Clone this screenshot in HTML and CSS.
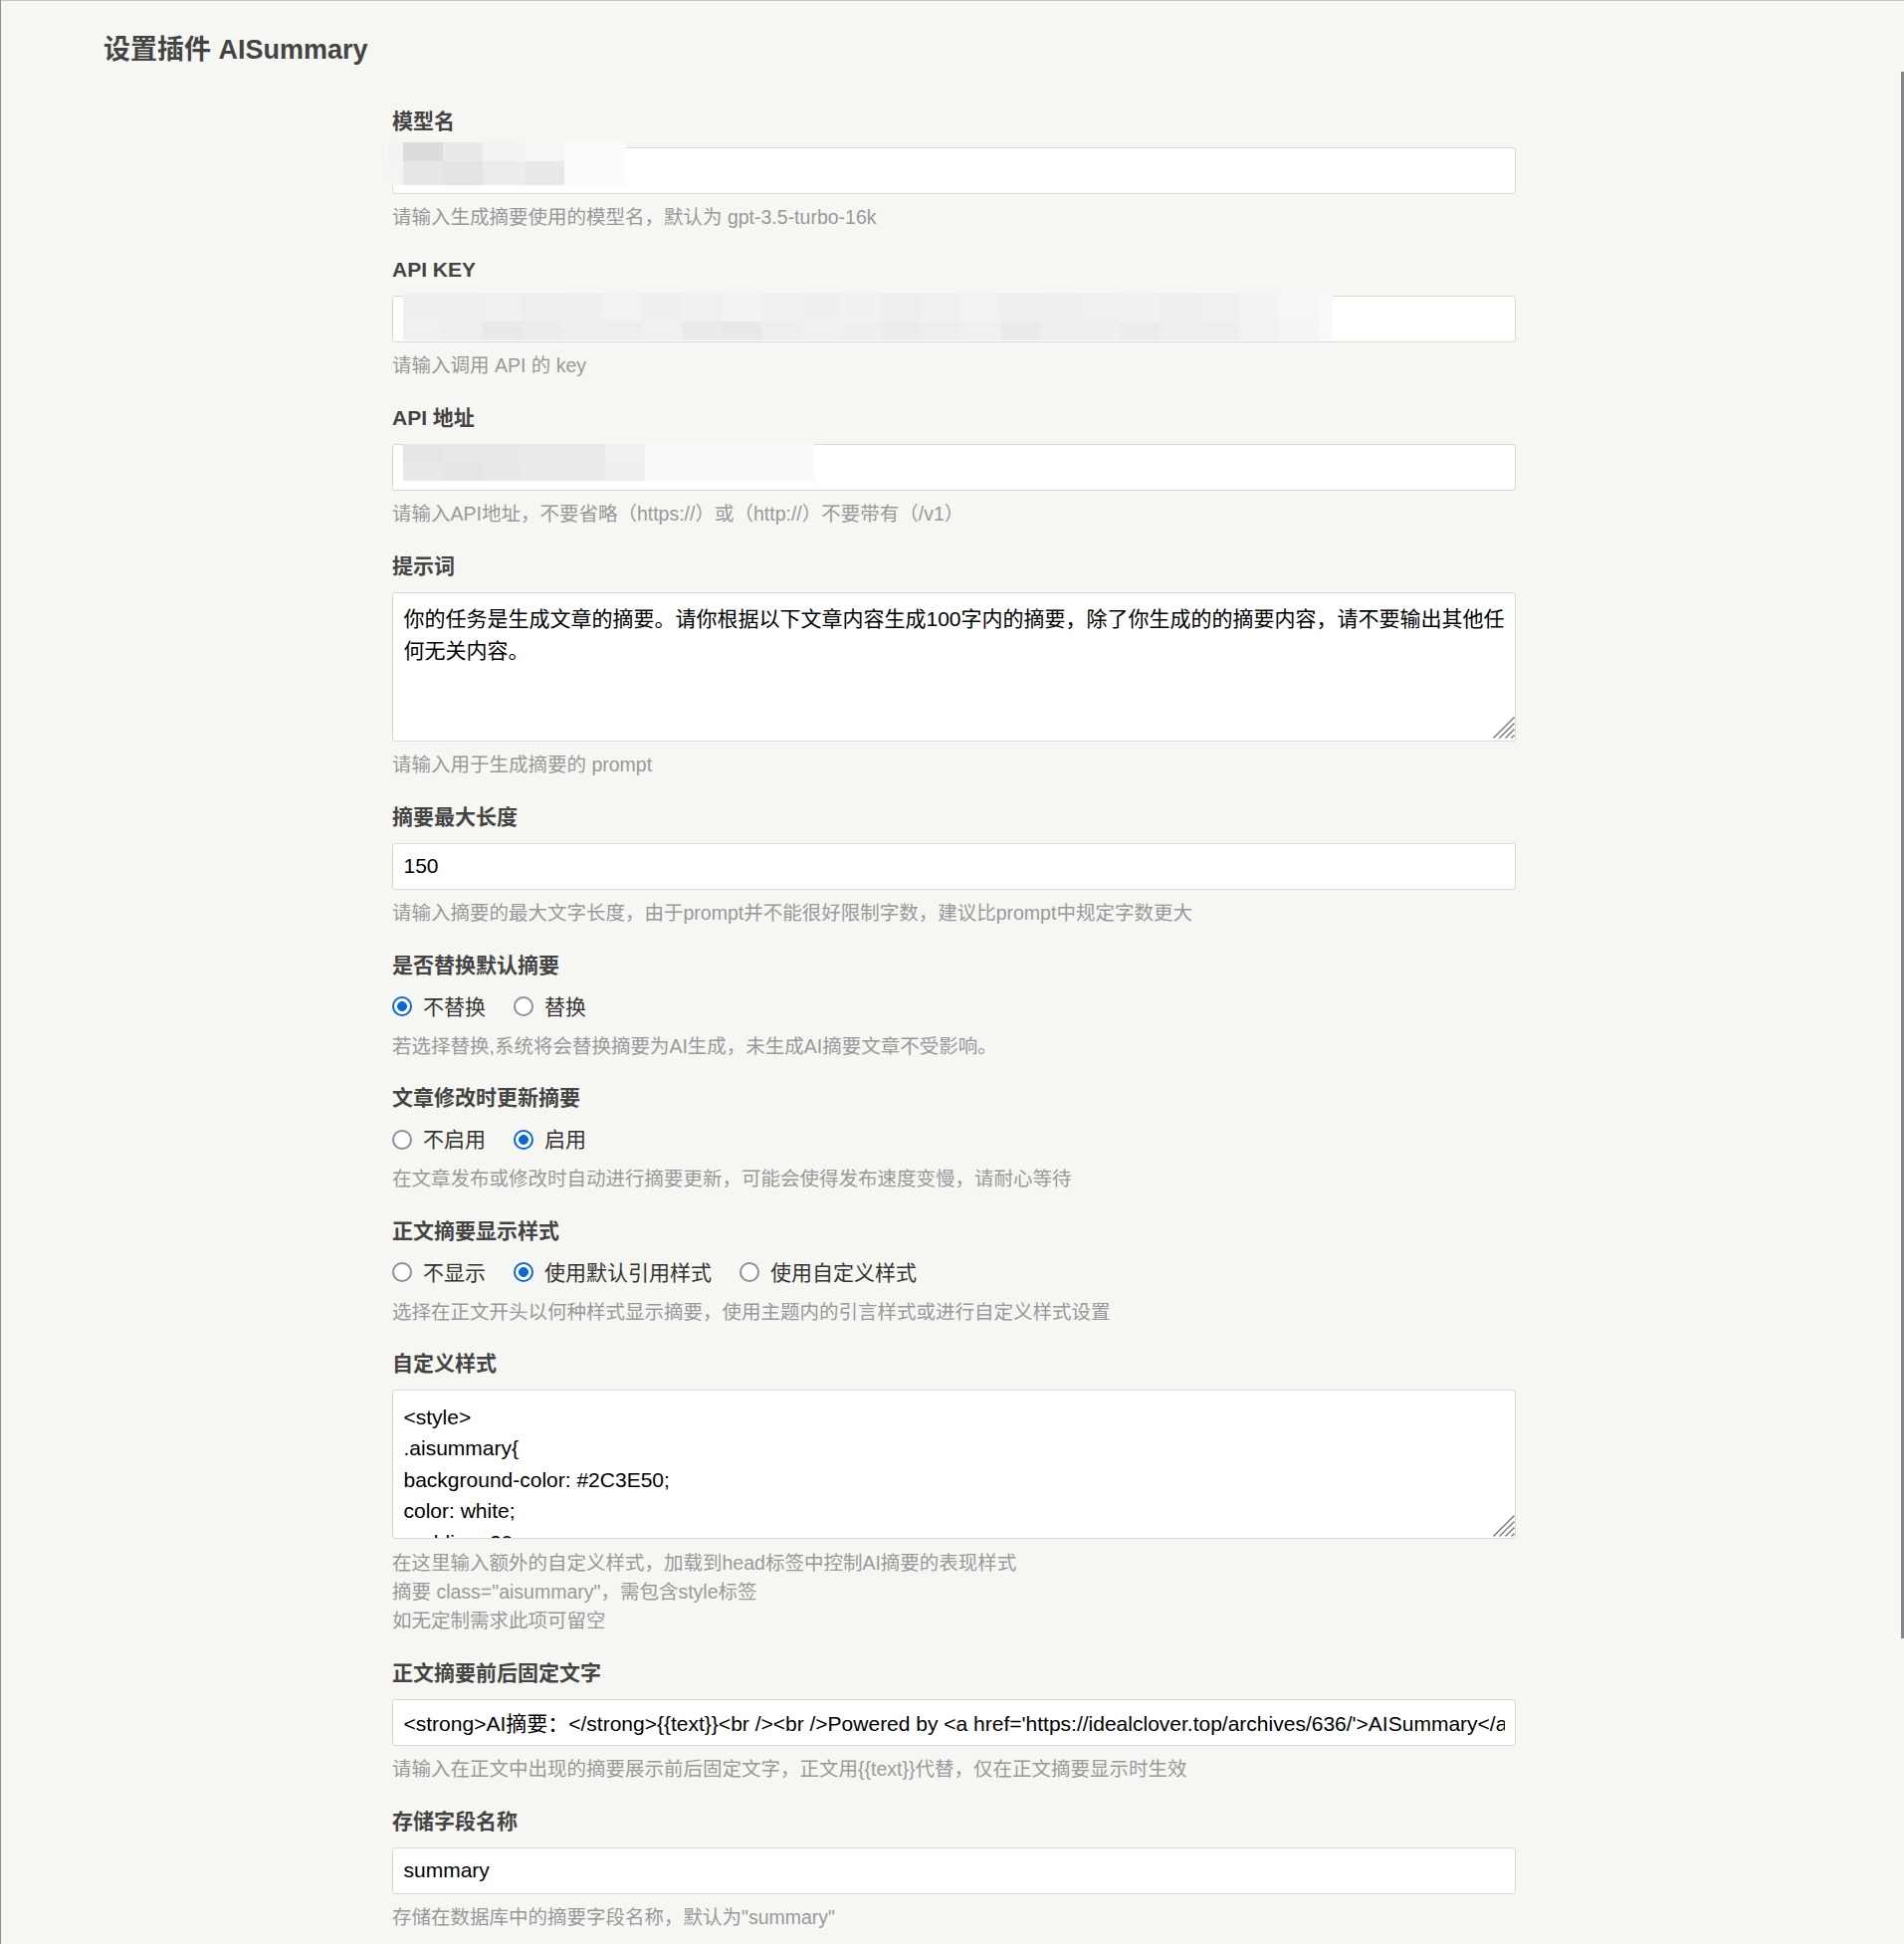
FILE: index.html
```html
<!DOCTYPE html>
<html lang="zh-CN">
<head>
<meta charset="utf-8">
<title>设置插件 AISummary</title>
<link rel="stylesheet" href="styles.css">
</head>
<body>
<div class="frame-top"></div>
<div class="frame-left"></div>
<div class="scroll-thumb"></div>

<main class="container">
  <h2 class="page-title">设置插件 AISummary</h2>

  <form class="settings">
    <ul class="option">
      <li>
        <label class="option-label">模型名</label>
        <div class="field">
          <input class="text-input" type="text" value="">
          <div class="mosaic" id="m1"></div>
        </div>
        <p class="description">请输入生成摘要使用的模型名，默认为 gpt-3.5-turbo-16k</p>
      </li>
    </ul>

    <ul class="option">
      <li>
        <label class="option-label">API KEY</label>
        <div class="field">
          <input class="text-input" type="text" value="">
          <div class="mosaic" id="m2"></div>
        </div>
        <p class="description">请输入调用 API 的 key</p>
      </li>
    </ul>

    <ul class="option">
      <li>
        <label class="option-label">API 地址</label>
        <div class="field">
          <input class="text-input" type="text" value="">
          <div class="mosaic" id="m3"></div>
        </div>
        <p class="description">请输入API地址，不要省略（https://）或（http://）不要带有（/v1）</p>
      </li>
    </ul>

    <ul class="option">
      <li>
        <label class="option-label">提示词</label>
        <div class="field">
          <textarea class="text-area prompt-area">你的任务是生成文章的摘要。请你根据以下文章内容生成100字内的摘要，除了你生成的的摘要内容，请不要输出其他任何无关内容。</textarea>
          <svg class="grip" width="22" height="22" viewBox="0 0 22 22"><path d="M0.5 21.5 L21.5 0.5 M6.5 21.5 L21.5 6.5 M12.5 21.5 L21.5 12.5 M18.5 21.5 L21.5 18.5"/></svg>
        </div>
        <p class="description">请输入用于生成摘要的 prompt</p>
      </li>
    </ul>

    <ul class="option">
      <li>
        <label class="option-label">摘要最大长度</label>
        <div class="field">
          <input class="text-input" type="text" value="150">
        </div>
        <p class="description">请输入摘要的最大文字长度，由于prompt并不能很好限制字数，建议比prompt中规定字数更大</p>
      </li>
    </ul>

    <ul class="option">
      <li>
        <label class="option-label">是否替换默认摘要</label>
        <div class="radio-group">
          <label class="radio"><input class="radio-input" type="radio" name="replace" checked><span>不替换</span></label>
          <label class="radio"><input class="radio-input" type="radio" name="replace"><span>替换</span></label>
        </div>
        <p class="description">若选择替换,系统将会替换摘要为AI生成，未生成AI摘要文章不受影响。</p>
      </li>
    </ul>

    <ul class="option">
      <li>
        <label class="option-label">文章修改时更新摘要</label>
        <div class="radio-group">
          <label class="radio"><input class="radio-input" type="radio" name="update"><span>不启用</span></label>
          <label class="radio"><input class="radio-input" type="radio" name="update" checked><span>启用</span></label>
        </div>
        <p class="description">在文章发布或修改时自动进行摘要更新，可能会使得发布速度变慢，请耐心等待</p>
      </li>
    </ul>

    <ul class="option">
      <li>
        <label class="option-label">正文摘要显示样式</label>
        <div class="radio-group">
          <label class="radio"><input class="radio-input" type="radio" name="show"><span>不显示</span></label>
          <label class="radio"><input class="radio-input" type="radio" name="show" checked><span>使用默认引用样式</span></label>
          <label class="radio"><input class="radio-input" type="radio" name="show"><span>使用自定义样式</span></label>
        </div>
        <p class="description">选择在正文开头以何种样式显示摘要，使用主题内的引言样式或进行自定义样式设置</p>
      </li>
    </ul>

    <ul class="option">
      <li>
        <label class="option-label">自定义样式</label>
        <div class="field">
          <textarea class="text-area">&lt;style&gt;
.aisummary{
background-color: #2C3E50;
color: white;
padding: 20px;
border-radius: 5px;
margin-bottom: 20px;
}
&lt;/style&gt;</textarea>
          <svg class="grip" width="22" height="22" viewBox="0 0 22 22"><path d="M0.5 21.5 L21.5 0.5 M6.5 21.5 L21.5 6.5 M12.5 21.5 L21.5 12.5 M18.5 21.5 L21.5 18.5"/></svg>
        </div>
        <p class="description">在这里输入额外的自定义样式，加载到head标签中控制AI摘要的表现样式<br>摘要 class="aisummary"，需包含style标签<br>如无定制需求此项可留空</p>
      </li>
    </ul>

    <ul class="option">
      <li>
        <label class="option-label">正文摘要前后固定文字</label>
        <div class="field">
          <input class="text-input" type="text" value="<strong>AI摘要：</strong>{{text}}<br /><br />Powered by <a href='https://idealclover.top/archives/636/'>AISummary</a>">
        </div>
        <p class="description">请输入在正文中出现的摘要展示前后固定文字，正文用{{text}}代替，仅在正文摘要显示时生效</p>
      </li>
    </ul>

    <ul class="option">
      <li>
        <label class="option-label">存储字段名称</label>
        <div class="field">
          <input class="text-input" type="text" value="summary">
        </div>
        <p class="description">存储在数据库中的摘要字段名称，默认为"summary"</p>
      </li>
    </ul>
  </form>
</main>
<script src="script.js"></script>
</body>
</html>
```

FILE: styles.css
```css
html {
  background: #F6F6F3;
  overflow: hidden;
}

body {
  margin: 0;
  font-family: "Liberation Sans", Arial, "Noto Sans CJK SC", sans-serif;
  font-size: 21px;
  line-height: 1.5;
  color: #444;
}

.frame-top {
  position: fixed;
  top: 0;
  left: 0;
  right: 0;
  height: 1px;
  background: #c6c6c6;
  z-index: 5;
}

.frame-left {
  position: fixed;
  top: 0;
  left: 0;
  bottom: 0;
  width: 1px;
  background: #8e8e8e;
  z-index: 5;
}

.scroll-thumb {
  position: fixed;
  right: 0;
  top: 72px;
  width: 3px;
  height: 1574px;
  background: #858585;
  z-index: 5;
}

.container {
  width: 1735px;
  margin: 0 auto;
}

.page-title {
  margin: 29.5px 0 0;
  padding: 0 15px;
  font-size: 27px;
  line-height: 40.5px;
  font-weight: bold;
  color: #444;
}

.settings {
  margin: 35.5px 0 0 290px;
  width: 1159px;
  padding: 0 15px;
  box-sizing: border-box;
  display: flex;
  flex-direction: column;
  gap: 21px;
}

.option {
  list-style: none;
  margin: 0;
  padding: 0;
}

.option-label {
  display: block;
  font-weight: bold;
  line-height: 31.5px;
  margin-bottom: 10.5px;
  color: #444;
}

.field {
  position: relative;
}

.text-input {
  display: block;
  width: 100%;
  height: 47px;
  box-sizing: border-box;
  margin: 0;
  padding: 0 10.5px;
  border: 1px solid #D9D9D6;
  border-radius: 3px;
  background: #fff;
  font-family: inherit;
  font-size: 21px;
  color: #000;
  outline: none;
}

.text-area {
  display: block;
  width: 100%;
  height: 150px;
  box-sizing: border-box;
  margin: 0;
  padding: 10.5px 8px 10.5px 10.5px;
  border: 1px solid #D9D9D6;
  border-radius: 3px;
  background: #fff;
  font-family: inherit;
  font-size: 21px;
  line-height: 31.5px;
  color: #000;
  resize: none;
  overflow: hidden;
  outline: none;
}

.grip {
  position: absolute;
  right: 1.5px;
  bottom: 2.5px;
  fill: none;
  stroke: #767676;
  stroke-width: 1.4;
}

.mosaic {
  position: absolute;
  display: grid;
  pointer-events: none;
}

.description {
  margin: 9.75px 0 0;
  font-size: 19.5px;
  line-height: 29.25px;
  color: #999;
}

.radio-group {
  display: flex;
  align-items: center;
  gap: 28px;
  height: 31.5px;
}

.radio {
  display: inline-flex;
  align-items: center;
  gap: 11px;
  color: #333;
  line-height: 31.5px;
}

.radio-input {
  appearance: none;
  -webkit-appearance: none;
  margin: 0;
  width: 20px;
  height: 20px;
  box-sizing: border-box;
  border: 2.5px solid #8f8d97;
  border-radius: 50%;
  background: #fff;
}

.radio-input:checked {
  border-color: #0b68d9;
  background: radial-gradient(circle, #0b68d9 0 4.6px, #fff 5.2px);
}
```

FILE: script.js
```js
var mosaics = [
  {
    id: 'm1', left: -3, top: -5,
    cols: [14, 40, 40, 42, 40, 62],
    rows: [19, 24],
    colors: [
      ['f3f3f3', 'dcdcdc', 'e9e9e9', 'f2f2f2', 'f6f6f6', 'fbfbfb'],
      ['f4f4f4', 'e7e7e7', 'e4e4e4', 'ececec', 'e9e9e9', 'fbfbfb']
    ]
  },
  {
    id: 'm2', left: 11, top: -2,
    cols: [40, 40, 40, 40, 40, 40, 40, 40, 40, 40, 40, 40, 40, 40, 40, 40, 40, 40, 40, 40, 40, 40, 40, 14],
    rows: [28, 19],
    colors: [
      ['efefef', 'efefef', 'f0f0f0', 'eeeeee', 'efefef', 'f2f2f2', 'efefef', 'f1f1f1', 'f3f3f3', 'f0f0f0', 'efefef', 'f1f1f1', 'eeeeee', 'f0f0f0', 'f2f2f2', 'eeeeee', 'efefef', 'f0f0f0', 'f1f1f1', 'efefef', 'f0f0f0', 'f3f3f3', 'f6f6f6', 'f9f9f9'],
      ['f0f0f0', 'eeeeee', 'e9e9e9', 'ececec', 'efefef', 'eeeeee', 'f0f0f0', 'ebebeb', 'e9e9e9', 'eeeeee', 'f0f0f0', 'efefef', 'ececec', 'eeeeee', 'f0f0f0', 'ebebeb', 'eeeeee', 'efefef', 'ececec', 'efefef', 'eeeeee', 'f2f2f2', 'f5f5f5', 'f9f9f9']
    ]
  },
  {
    id: 'm3', left: 11, top: 0,
    cols: [40, 40, 40, 83, 40, 170],
    rows: [19, 18],
    colors: [
      ['e6e6e6', 'e8e8e8', 'e9e9e9', 'eaeaea', 'f0f0f0', 'fafafa'],
      ['e8e8e8', 'e6e6e6', 'e8e8e8', 'ebebeb', 'efefef', 'f9f9f9']
    ]
  }
];

mosaics.forEach(function (m) {
  var el = document.getElementById(m.id);
  if (!el) return;
  el.style.left = m.left + 'px';
  el.style.top = m.top + 'px';
  el.style.gridTemplateColumns = m.cols.map(function (c) { return c + 'px'; }).join(' ');
  el.style.gridTemplateRows = m.rows.map(function (r) { return r + 'px'; }).join(' ');
  m.colors.forEach(function (row) {
    row.forEach(function (c) {
      var cell = document.createElement('span');
      cell.style.background = '#' + c;
      el.appendChild(cell);
    });
  });
});
```
